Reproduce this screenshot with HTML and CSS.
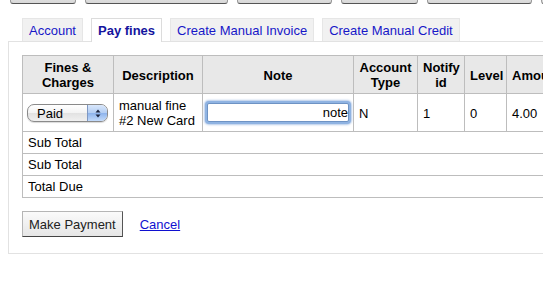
FILE: index.html
```html
<!DOCTYPE html>
<html>
	<head>
		<title>Pay fines</title>
		<link rel="stylesheet" href="styles.css">
	</head>
	<body>
		<div id="toolbar">
			<button type="button" class="tool-btn tool-a"></button>
			<button type="button" class="tool-btn tool-b"></button>
			<button type="button" class="tool-btn tool-c"></button>
			<button type="button" class="tool-btn tool-d"></button>
			<button type="button" class="tool-btn tool-e"></button>
			<button type="button" class="tool-btn tool-f"></button>
		</div>

		<ul id="tabs">
			<li class="tab"><a href="#">Account</a></li>
			<li class="tab tab-selected"><a href="#">Pay fines</a></li>
			<li class="tab"><a href="#">Create Manual Invoice</a></li>
			<li class="tab"><a href="#">Create Manual Credit</a></li>
		</ul>

		<div id="panel">
			<table id="fines">
				<colgroup>
					<col class="c-fines">
					<col class="c-desc">
					<col class="c-note">
					<col class="c-type">
					<col class="c-notify">
					<col class="c-level">
					<col class="c-amount">
					<col class="c-outstanding">
				</colgroup>
				<thead>
					<tr>
						<th>Fines &amp; Charges</th>
						<th>Description</th>
						<th>Note</th>
						<th>Account Type</th>
						<th>Notify id</th>
						<th>Level</th>
						<th>Amount</th>
						<th>Amount Outstanding</th>
					</tr>
				</thead>
				<tbody>
					<tr class="fine-row">
						<td>
							<span class="select-wrap">
								<select class="pay-select">
									<option>Paid</option>
									<option>Unpaid</option>
									<option>Writeoff</option>
								</select>
								<span class="select-arrows">
									<svg width="6" height="9" viewBox="0 0 6 9">
										<path d="M3 0.5 L5.5 3.5 L0.5 3.5 Z" fill="#1b2540"/>
										<path d="M3 8.5 L5.5 5.5 L0.5 5.5 Z" fill="#1b2540"/>
									</svg>
								</span>
							</span>
						</td>
						<td>manual fine #2 New Card</td>
						<td class="note-cell"><input type="text" class="note-input" value="note"></td>
						<td>N</td>
						<td>1</td>
						<td>0</td>
						<td>4.00</td>
						<td>4.00</td>
					</tr>
					<tr class="total-row">
						<td colspan="7">Sub Total</td>
						<td>4.00</td>
					</tr>
					<tr class="total-row">
						<td colspan="7">Sub Total</td>
						<td>4.00</td>
					</tr>
					<tr class="total-row">
						<td colspan="7">Total Due</td>
						<td>4.00</td>
					</tr>
				</tbody>
			</table>

			<div id="actions">
				<button type="button" class="pay-btn">Make Payment</button>
				<a href="#" class="cancel-link">Cancel</a>
			</div>
		</div>
	</body>
</html>
```

FILE: styles.css
```css
html {
	height: 100%;
}

body {
	margin: 0;
	font-family: "Liberation Sans", Arial, sans-serif;
	font-size: 13px;
	color: #000;
	background-color: #fff;
	overflow: hidden;
}

/* ---- top toolbar, only the bottom edge is visible ---- */
#toolbar {
	height: 4px;
	overflow: hidden;
	display: flex;
	align-items: flex-end;
	gap: 9px;
	padding-left: 10px;
}

.tool-btn {
	flex: none;
	height: 20px;
	padding: 0;
	background: linear-gradient(to bottom, #f2f2f2, #d9d9d9);
	border: 1px solid #9a9a9a;
	border-bottom-color: #555;
	border-radius: 3px;
}

.tool-a { width: 66px; }
.tool-b { width: 143px; }
.tool-c { width: 95px; }
.tool-d { width: 77px; }
.tool-e { width: 105px; }
.tool-f { width: 60px; }

/* ---- tabs ---- */
#tabs {
	list-style: none;
	margin: 14px 0 0 22px;
	padding: 0;
	display: flex;
	gap: 8px;
	position: relative;
	z-index: 1;
}

.tab {
	height: 23px;
	background-color: #f1f1f1;
	border: 1px solid #e6e6e6;
	border-bottom: none;
	box-sizing: border-box;
}

.tab a {
	display: block;
	padding: 0 6px;
	line-height: 23px;
	color: #1717c8;
	text-decoration: none;
}

.tab-selected {
	background-color: #fff;
	border-color: #dcdcdc;
	height: 24px;
	margin-bottom: -1px;
}

.tab-selected a {
	font-weight: bold;
	color: #14149e;
}

/* ---- panel ---- */
#panel {
	margin-left: 8px;
	width: 560px;
	border: 1px solid #e2e2e2;
	padding: 13px 13px 16px 13px;
}

#fines {
	border-collapse: collapse;
	table-layout: fixed;
	width: 642px;
	line-height: 15px;
}

.c-fines { width: 91px; }
.c-desc { width: 89px; }
.c-note { width: 151px; }
.c-type { width: 64px; }
.c-notify { width: 47px; }
.c-level { width: 42px; }
.c-amount { width: 58px; }
.c-outstanding { width: 100px; }

#fines th,
#fines td {
	border: 1px solid #bdbdbd;
	padding: 4px 5px 3px 5px;
	vertical-align: middle;
}

#fines th {
	background-color: #e8e8e8;
	font-weight: bold;
	text-align: center;
}

#fines td {
	text-align: left;
}

#fines .total-row td {
	padding: 3px 5px;
}

#fines .total-row td:first-child {
	border-right: none;
}

/* ---- select (mac style pill) ---- */
.select-wrap {
	position: relative;
	display: inline-block;
	vertical-align: middle;
}

.pay-select {
	-webkit-appearance: none;
	appearance: none;
	display: block;
	width: 81px;
	height: 18px;
	margin: 0 0 0 -1px;
	padding: 0 0 0 9px;
	font-family: "Liberation Sans", Arial, sans-serif;
	font-size: 13px;
	color: #000;
	border: 1px solid #8a8a8a;
	border-radius: 7px;
	background: linear-gradient(to bottom, #ffffff, #f3f3f3 50%, #e2e2e2 51%, #f0f0f0);
	box-shadow: 0 1px 1px rgba(0, 0, 0, 0.15);
}

.select-arrows {
	position: absolute;
	top: 1px;
	right: 1px;
	width: 19px;
	height: 16px;
	border-left: 1px solid #7f98c2;
	border-radius: 0 6px 6px 0;
	background: linear-gradient(to bottom, #d9e7fb, #b2cdf3 50%, #8db3ec 51%, #c3dbfb);
	display: flex;
	align-items: center;
	justify-content: center;
	pointer-events: none;
}

/* ---- note field with focus ring ---- */
#fines .note-cell {
	padding: 3px 4px;
}

.note-input {
	display: block;
	width: 100%;
	height: 19px;
	box-sizing: border-box;
	margin: 0;
	padding: 0 0 0 2px;
	font-family: "Liberation Sans", Arial, sans-serif;
	font-size: 13px;
	text-align: right;
	border: 1px solid #6e93c4;
	border-radius: 2px;
	box-shadow: 0 0 0 2px #8fb3e2, 0 0 2px 3px rgba(120, 160, 215, 0.55);
	outline: none;
}

/* ---- actions ---- */
#actions {
	margin-top: 13px;
	display: flex;
	align-items: center;
	gap: 17px;
}

.pay-btn {
	height: 26px;
	padding: 0 6px;
	font-family: "Liberation Sans", Arial, sans-serif;
	font-size: 13px;
	color: #222;
	background: linear-gradient(to bottom, #fafafa, #e6e6e6);
	border: 1px solid #b5b5b5;
	border-right-color: #555;
	border-bottom-color: #444;
	border-radius: 0;
}

.cancel-link {
	color: #1010d0;
	text-decoration: underline;
}
```
